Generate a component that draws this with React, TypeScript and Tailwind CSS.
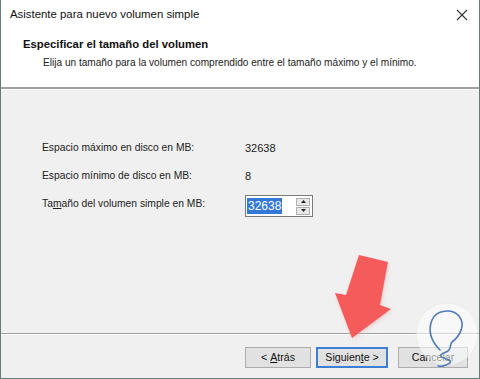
import React from "react";

const font = { fontFamily: '"Segoe UI", "Liberation Sans", Arial, sans-serif' };

function Btn({ children, focused, w }: { children: React.ReactNode; focused?: boolean; w: string }) {
  return (
    <div
      className={
        w +
        " h-[21px] flex items-center justify-center text-[10.6px] text-[#111] bg-[#e1e1e1] " +
        (focused ? "border-2 border-[#3c7fd6]" : "border border-[#adadad]")
      }
    >
      {children}
    </div>
  );
}

export default function App() {
  return (
    <div className="relative w-[480px] h-[379px] overflow-hidden bg-white" style={font}>
      <div className="flex flex-col w-full h-full border-x border-b border-[#5f7f7c]">
        {/* title bar */}
        <div className="h-[30px] flex items-center justify-between pl-[9px] pr-[9px] bg-white shrink-0">
          <span className="text-[11.4px] text-[#111]">Asistente para nuevo volumen simple</span>
          <svg width="12" height="12" viewBox="0 0 12 12" className="mr-[2px]">
            <path d="M1 1 L11 11 M11 1 L1 11" stroke="#333" strokeWidth="1.1" />
          </svg>
        </div>
        {/* header */}
        <div className="h-[57px] bg-white shrink-0 pt-[6px]">
          <div className="pl-[22px] text-[11.3px] font-bold text-[#111] leading-[16px]">
            Especificar el tamaño del volumen
          </div>
          <div className="pl-[42px] text-[10.1px] text-[#222] leading-[16px] mt-[3px]">
            Elija un tamaño para la volumen comprendido entre el tamaño máximo y el mínimo.
          </div>
        </div>
        <div className="h-[2px] bg-[#a0a0a0] shrink-0" />
        <div className="h-px bg-white shrink-0" />
        {/* body */}
        <div className="flex-1 bg-[#f0f0f0] pt-[50px] pl-[41px]">
          <div className="flex flex-col gap-[12px] text-[10.3px] text-[#222]">
            <div className="flex items-center h-[16px]">
              <span className="w-[203px]">Espacio máximo en disco en MB:</span>
              <span className="text-[11px]">32638</span>
            </div>
            <div className="flex items-center h-[16px]">
              <span className="w-[203px]">Espacio mínimo de disco en MB:</span>
              <span className="text-[11px]">8</span>
            </div>
            <div className="flex items-center h-[16px]">
              <span className="w-[203px]">
                Ta<span className="underline">m</span>año del volumen simple en MB:
              </span>
              <div className="flex items-center w-[68px] h-[22px] mt-[4px] bg-white border border-[#7a7a7a] pl-[1px] pr-[2px] text-[12px]">
                <span className="bg-[#3378d6] text-white leading-[16px] px-px">32638</span>
                <div className="ml-auto flex flex-col gap-px">
                  <div className="w-[14px] h-[8px] bg-[#e8e8e8] border border-[#b0b0b0] flex items-center justify-center">
                    <svg width="5" height="3" viewBox="0 0 5 3"><path d="M0 3 L2.5 0 L5 3Z" fill="#222" /></svg>
                  </div>
                  <div className="w-[14px] h-[8px] bg-[#e8e8e8] border border-[#b0b0b0] flex items-center justify-center">
                    <svg width="5" height="3" viewBox="0 0 5 3"><path d="M0 0 L2.5 3 L5 0Z" fill="#222" /></svg>
                  </div>
                </div>
              </div>
            </div>
          </div>
        </div>
        <div className="h-px bg-[#a0a0a0] shrink-0" />
        <div className="h-px bg-white shrink-0" />
        {/* footer */}
        <div className="h-[43px] bg-[#f0f0f0] shrink-0 flex items-start justify-end pt-[12px] pr-[11px]">
          <Btn w="w-[66px]">
            &lt; <span className="underline ml-[3px]">A</span>trás
          </Btn>
          <div className="w-[5px]" />
          <Btn focused w="w-[72px]">
            Siguien<span className="underline">t</span>e &gt;
          </Btn>
          <div className="w-[10px]" />
          <Btn w="w-[70px]">Cancelar</Btn>
        </div>
      </div>

      {/* red arrow */}
      <svg className="absolute left-0 top-0 pointer-events-none" width="480" height="379">
        <defs>
          <filter id="sh" x="-20%" y="-20%" width="140%" height="140%">
            <feGaussianBlur stdDeviation="2" />
          </filter>
        </defs>
        <polygon
          points="359,255 388,262 380,305 391,309 352,338 335,293 346,295"
          fill="#f4b0b0"
          opacity="0.5"
          filter="url(#sh)"
          transform="translate(1,2)"
        />
        <polygon points="359,255 388,262 380,305 391,309 352,338 335,293 346,295" fill="#f65b5b" />
        {/* watermark logo */}
        <circle cx="447" cy="334" r="31" fill="#ffffff" opacity="0.55" stroke="#e6e6e6" strokeWidth="1" />
        <path
          d="M440 350 C430 340 428 330 432 320 C436 310 452 308 459 316 C466 325 460 336 452 342 C449 346 452 350 446 352 C441 354 438 356 444 358 C450 360 454 362 446 365 C442 367 440 366 438 366"
          fill="none"
          stroke="#4f7bbd"
          strokeWidth="1.6"
          strokeLinecap="round"
        />
      </svg>
    </div>
  );
}
